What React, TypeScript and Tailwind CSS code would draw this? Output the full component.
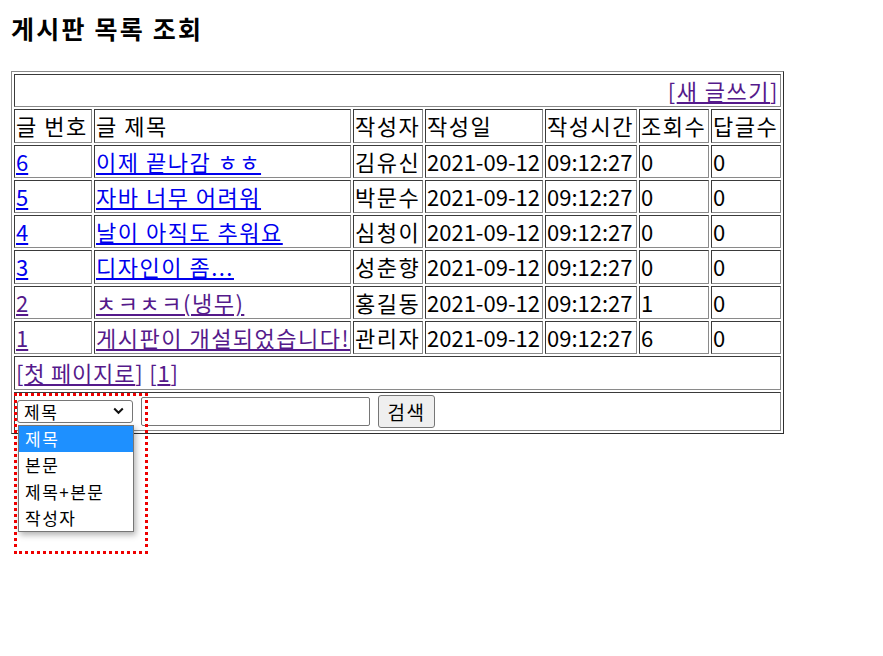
import React from 'react';

const FONT = "font-['Noto_Sans_CJK_KR','Noto_Sans',sans-serif]";
const cell =
  'border border-solid border-t-[#3a3a3a] border-l-[#3a3a3a] border-r-[#8a8a8a] border-b-[#8a8a8a] p-px leading-[29.3px] text-left align-middle whitespace-nowrap overflow-hidden';
// 한글 글리프 폭을 맞추기 위한 자간
const ko = 'tracking-[1.5px]';

const posts = [
  { no: 6, title: '이제 끝나감 ㅎㅎ', writer: '김유신', hits: 0, visited: false },
  { no: 5, title: '자바 너무 어려워', writer: '박문수', hits: 0, visited: false },
  { no: 4, title: '날이 아직도 추워요', writer: '심청이', hits: 0, visited: false },
  { no: 3, title: '디자인이 좀...', writer: '성춘향', hits: 0, visited: false },
  { no: 2, title: 'ㅊㅋㅊㅋ(냉무)', writer: '홍길동', hits: 1, visited: true },
  { no: 1, title: '게시판이 개설되었습니다!', writer: '관리자', hits: 6, visited: true },
];

export default function App() {
  return (
    <div className={`relative min-h-screen bg-white text-black ${FONT} px-[11px] pt-[10px]`}>
      <h3 className="text-[25px] font-bold leading-[36px] tracking-[2.2px] mb-[25px]">게시판 목록 조회</h3>

      <table className="table-fixed w-[773px] border-separate border-spacing-[2px] border border-solid border-t-[#8a8a8a] border-l-[#8a8a8a] border-r-[#2e2e2e] border-b-[#2e2e2e] text-[22px]">
        <colgroup>
          <col className="w-[78px]" />
          <col className="w-[257px]" />
          <col className="w-[70px]" />
          <col className="w-[118px]" />
          <col className="w-[92px]" />
          <col className="w-[70px]" />
          <col className="w-[70px]" />
        </colgroup>
        <tbody>
          <tr>
            <td colSpan={7} className={`${cell} ${ko} !text-right text-[#551a8b]`}>
              [<a href="#" className="underline text-[#551a8b]">새 글쓰기</a>]
            </td>
          </tr>
          <tr className={ko}>
            <td className={cell}>글 번호</td>
            <td className={cell}>글 제목</td>
            <td className={cell}>작성자</td>
            <td className={cell}>작성일</td>
            <td className={cell}>작성시간</td>
            <td className={cell}>조회수</td>
            <td className={cell}>답글수</td>
          </tr>
          {posts.map((p) => {
            const link = p.visited ? 'underline text-[#551a8b]' : 'underline text-[#0000ee]';
            return (
              <tr key={p.no}>
                <td className={cell}>
                  <a href="#" className={link}>{p.no}</a>
                </td>
                <td className={`${cell} ${ko}`}>
                  <a href="#" className={link}>{p.title}</a>
                </td>
                <td className={`${cell} ${ko}`}>{p.writer}</td>
                <td className={cell}>2021-09-12</td>
                <td className={cell}>09:12:27</td>
                <td className={cell}>{p.hits}</td>
                <td className={cell}>0</td>
              </tr>
            );
          })}
          <tr>
            <td colSpan={7} className={`${cell} tracking-[0.8px] text-[#551a8b]`}>
              [<a href="#" className="underline">첫 페이지로</a>] [<a href="#" className="underline">1</a>]
            </td>
          </tr>
          <tr>
            <td colSpan={7} className={`${cell} !leading-normal`}>
              <div className="flex items-center h-[35px] gap-2 pl-px">
                <div className="flex items-center justify-between w-[116px] h-[23px] border border-[#767676] rounded-[3px] bg-white pl-[6px] pr-[8px] text-[17px] tracking-[1.5px] leading-none">
                  <span>제목</span>
                  <svg width="11" height="8" viewBox="0 0 11 8" fill="none">
                    <path d="M1.2 1.5 L5.5 5.8 L9.8 1.5" stroke="#111" strokeWidth="2" />
                  </svg>
                </div>
                <input
                  type="text"
                  className="w-[229px] h-[29px] border border-[#767676] rounded-[2px] bg-white outline-none px-1 text-[17px]"
                />
                <button className="w-[57px] h-[33px] border border-[#767676] rounded-[3px] bg-[#efefef] text-[19px] tracking-[1.5px] leading-none">
                  검색
                </button>
              </div>
            </td>
          </tr>
        </tbody>
      </table>

      {/* 펼쳐진 검색 조건 목록 */}
      <div className="absolute left-[18px] top-[425px] w-[116px] border border-[#767676] bg-white shadow-[2px_3px_6px_rgba(0,0,0,0.3)] text-[17px] tracking-[1.5px]">
        {['제목', '본문', '제목+본문', '작성자'].map((o, i) => (
          <div
            key={o}
            className={`h-[26.3px] leading-[26.3px] pl-[6px] ${i === 0 ? 'bg-[#1e90ff] text-white' : 'text-black'}`}
          >
            {o}
          </div>
        ))}
      </div>

      <div className="absolute left-[14px] top-[393px] w-[134px] h-[161px] border-[3px] border-dotted border-[#ee0000] pointer-events-none" />
    </div>
  );
}
